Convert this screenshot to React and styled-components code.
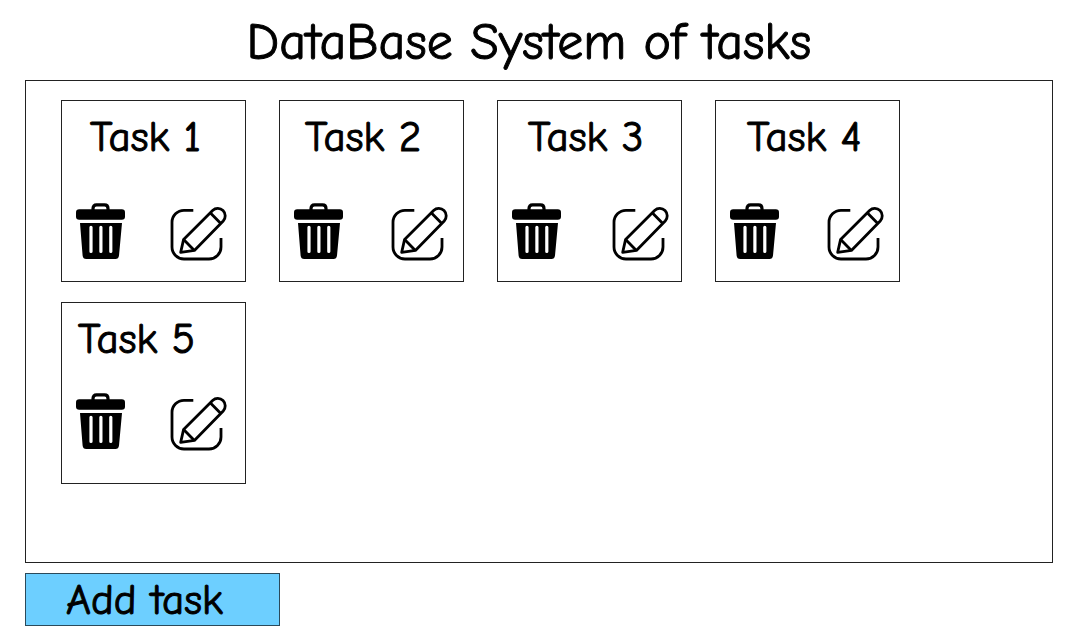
import React from "react";
import styled, { createGlobalStyle } from "styled-components";

const GlobalStyle = createGlobalStyle`
  *, *::before, *::after { box-sizing: border-box; }
  body {
    margin: 0;
    background: #fff;
    color: #000;
    font-family: "Comic Sans MS", "Comic Neue", "Noto Sans", sans-serif;
    -webkit-text-stroke: 1px currentColor;
  }
`;

const Page = styled.main`
  padding: 8px 27px 12px 25px;
`;

const Title = styled.h1`
  margin: 0;
  padding-top: 2px;
  font-size: 52px;
  line-height: 64px;
  font-weight: 400;
  text-align: center;
  text-indent: -20px;
`;

const Board = styled.ul`
  display: flex;
  flex-wrap: wrap;
  gap: 20px 33px;
  margin: 6px 0 10px;
  padding: 19px 36px 78px 35px;
  border: 1px solid #222;
  list-style: none;
`;

const Card = styled.li`
  display: flex;
  flex-direction: column;
  gap: ${({ $compact }) => ($compact ? "30px" : "42px")};
  width: 185px;
  height: 182px;
  padding-top: 12px;
  border: 1px solid #222;
`;

const CardTitle = styled.h2`
  margin: 0;
  padding-left: ${({ $inset }) => $inset}px;
  font-size: 43px;
  line-height: 48px;
  font-weight: 400;
`;

const Actions = styled.div`
  display: flex;
  gap: ${({ $gap }) => $gap}px;
  padding-left: 14px;
`;

const IconButton = styled.button`
  display: flex;
  padding: 0;
  border: 0;
  background: none;
  color: #000;
  cursor: pointer;
`;

const EditButton = styled(IconButton)`
  padding-top: 3px;
`;

const AddButton = styled.button`
  display: block;
  width: 255px;
  padding: 2px 0 0 40px;
  border: 1px solid #2b4a5a;
  background: #6dcfff;
  color: #000;
  font-family: inherit;
  font-size: 43px;
  line-height: 49px;
  text-align: left;
  -webkit-text-stroke: inherit;
  cursor: pointer;
`;

const TrashIcon = () => (
  <svg width="49" height="56" viewBox="0 0 49 56" aria-hidden="true">
    <path
      d="M17 8 V5.5 Q17 1.8 20.5 1.8 H28.5 Q32 1.8 32 5.5 V8"
      fill="none"
      stroke="currentColor"
      strokeWidth="3.2"
    />
    <rect x="0" y="6.2" width="49" height="10.6" rx="3.2" fill="currentColor" />
    <path
      fill="currentColor"
      fillRule="evenodd"
      d="M4 20 H46 L43 52.5 Q42.6 56 39.4 56 H10.2 Q7 56 6.6 52.5 Z
         M13.4 24.3 V48.4 a1.6 1.6 0 0 0 3.2 0 V24.3 a1.6 1.6 0 0 0 -3.2 0 Z
         M23.3 24.3 V48.4 a1.6 1.6 0 0 0 3.2 0 V24.3 a1.6 1.6 0 0 0 -3.2 0 Z
         M33.2 24.3 V48.4 a1.6 1.6 0 0 0 3.2 0 V24.3 a1.6 1.6 0 0 0 -3.2 0 Z"
    />
  </svg>
);

const EditIcon = () => (
  <svg
    width="57"
    height="56"
    viewBox="0 0 57 56"
    fill="none"
    stroke="currentColor"
    strokeWidth="2.8"
    strokeLinejoin="round"
    aria-hidden="true"
  >
    <path d="M23.3 4.3 H14 A12 12 0 0 0 2 16.3 V41 A12 12 0 0 0 14 53 H39 A12 12 0 0 0 51 41 V32" />
    <path d="M10.7 46.3 L13.6 33.4 L42.6 4.4 A7.5 7.5 0 0 1 53.2 15 L24.4 44.4 Z" />
    <path d="M13.6 33.4 L24.4 44.4 M40.2 6.8 L50.8 17.4" />
  </svg>
);

const tasks = [
  { name: "Task 1", inset: 28, gap: 45 },
  { name: "Task 2", inset: 25, gap: 48 },
  { name: "Task 3", inset: 30, gap: 51 },
  { name: "Task 4", inset: 31, gap: 48 },
  { name: "Task 5", inset: 16, gap: 45, compact: true },
];

const TaskCard = ({ name, inset, gap, compact }) => (
  <Card $compact={compact}>
    <CardTitle $inset={inset}>{name}</CardTitle>
    <Actions $gap={gap}>
      <IconButton type="button" aria-label={`Delete ${name}`}>
        <TrashIcon />
      </IconButton>
      <EditButton type="button" aria-label={`Edit ${name}`}>
        <EditIcon />
      </EditButton>
    </Actions>
  </Card>
);

export default function App() {
  return (
    <>
      <GlobalStyle />
      <Page>
        <Title>DataBase System of tasks</Title>
        <Board>
          {tasks.map((task) => (
            <TaskCard key={task.name} {...task} />
          ))}
        </Board>
        <AddButton type="button">Add task</AddButton>
      </Page>
    </>
  );
}
